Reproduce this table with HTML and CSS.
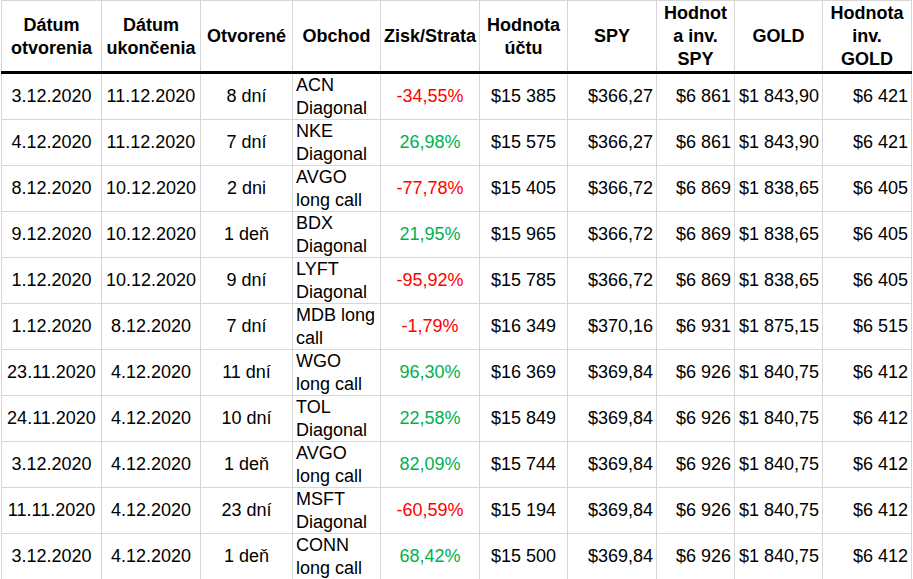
FILE: index.html
```html
<!DOCTYPE html>
<html lang="sk">
<head>
<meta charset="utf-8">
<title>Obchody</title>
<link rel="stylesheet" href="styles.css">
</head>
<body>
<table class="sheet">
  <colgroup>
    <col class="c1"><col class="c2"><col class="c3"><col class="c4"><col class="c5">
    <col class="c6"><col class="c7"><col class="c8"><col class="c9"><col class="c10">
  </colgroup>
  <thead>
    <tr>
      <th>Dátum<br>otvorenia</th>
      <th>Dátum<br>ukončenia</th>
      <th>Otvorené</th>
      <th>Obchod</th>
      <th>Zisk/Strata</th>
      <th>Hodnota<br>účtu</th>
      <th>SPY</th>
      <th>Hodnot<br>a inv.<br>SPY</th>
      <th>GOLD</th>
      <th>Hodnota<br>inv.<br>GOLD</th>
    </tr>
  </thead>
  <tbody>
    <tr><td class="ctr">3.12.2020</td><td class="ctr">11.12.2020</td><td class="ctr">8 dní</td><td class="deal">ACN Diagonal</td><td class="ctr neg">-34,55%</td><td class="ctr">$15 385</td><td class="num">$366,27</td><td class="num">$6 861</td><td class="num">$1 843,90</td><td class="num">$6 421</td></tr>
    <tr><td class="ctr">4.12.2020</td><td class="ctr">11.12.2020</td><td class="ctr">7 dní</td><td class="deal">NKE Diagonal</td><td class="ctr pos">26,98%</td><td class="ctr">$15 575</td><td class="num">$366,27</td><td class="num">$6 861</td><td class="num">$1 843,90</td><td class="num">$6 421</td></tr>
    <tr><td class="ctr">8.12.2020</td><td class="ctr">10.12.2020</td><td class="ctr">2 dni</td><td class="deal">AVGO long call</td><td class="ctr neg">-77,78%</td><td class="ctr">$15 405</td><td class="num">$366,72</td><td class="num">$6 869</td><td class="num">$1 838,65</td><td class="num">$6 405</td></tr>
    <tr><td class="ctr">9.12.2020</td><td class="ctr">10.12.2020</td><td class="ctr">1 deň</td><td class="deal">BDX Diagonal</td><td class="ctr pos">21,95%</td><td class="ctr">$15 965</td><td class="num">$366,72</td><td class="num">$6 869</td><td class="num">$1 838,65</td><td class="num">$6 405</td></tr>
    <tr><td class="ctr">1.12.2020</td><td class="ctr">10.12.2020</td><td class="ctr">9 dní</td><td class="deal">LYFT Diagonal</td><td class="ctr neg">-95,92%</td><td class="ctr">$15 785</td><td class="num">$366,72</td><td class="num">$6 869</td><td class="num">$1 838,65</td><td class="num">$6 405</td></tr>
    <tr><td class="ctr">1.12.2020</td><td class="ctr">8.12.2020</td><td class="ctr">7 dní</td><td class="deal">MDB long call</td><td class="ctr neg">-1,79%</td><td class="ctr">$16 349</td><td class="num">$370,16</td><td class="num">$6 931</td><td class="num">$1 875,15</td><td class="num">$6 515</td></tr>
    <tr><td class="ctr">23.11.2020</td><td class="ctr">4.12.2020</td><td class="ctr">11 dní</td><td class="deal">WGO long call</td><td class="ctr pos">96,30%</td><td class="ctr">$16 369</td><td class="num">$369,84</td><td class="num">$6 926</td><td class="num">$1 840,75</td><td class="num">$6 412</td></tr>
    <tr><td class="ctr">24.11.2020</td><td class="ctr">4.12.2020</td><td class="ctr">10 dní</td><td class="deal">TOL Diagonal</td><td class="ctr pos">22,58%</td><td class="ctr">$15 849</td><td class="num">$369,84</td><td class="num">$6 926</td><td class="num">$1 840,75</td><td class="num">$6 412</td></tr>
    <tr><td class="ctr">3.12.2020</td><td class="ctr">4.12.2020</td><td class="ctr">1 deň</td><td class="deal">AVGO long call</td><td class="ctr pos">82,09%</td><td class="ctr">$15 744</td><td class="num">$369,84</td><td class="num">$6 926</td><td class="num">$1 840,75</td><td class="num">$6 412</td></tr>
    <tr><td class="ctr">11.11.2020</td><td class="ctr">4.12.2020</td><td class="ctr">23 dní</td><td class="deal">MSFT Diagonal</td><td class="ctr neg">-60,59%</td><td class="ctr">$15 194</td><td class="num">$369,84</td><td class="num">$6 926</td><td class="num">$1 840,75</td><td class="num">$6 412</td></tr>
    <tr><td class="ctr">3.12.2020</td><td class="ctr">4.12.2020</td><td class="ctr">1 deň</td><td class="deal">CONN long call</td><td class="ctr pos">68,42%</td><td class="ctr">$15 500</td><td class="num">$369,84</td><td class="num">$6 926</td><td class="num">$1 840,75</td><td class="num">$6 412</td></tr>
  </tbody>
</table>
</body>
</html>
```

FILE: styles.css
```css
html, body {
  margin: 0;
  padding: 0;
  background: #ffffff;
}

body {
  font-family: "Liberation Sans", Arial, sans-serif;
  font-size: 18px;
  color: #000000;
}

.sheet {
  border-collapse: collapse;
  table-layout: fixed;
  width: 910px;
  margin-left: 1px;
  border-left: 1px solid #9e9e9e;
  border-right: 1px solid #c8c8c8;
  border-bottom: 1px solid #c8c8c8;
}

.c1 { width: 100px; }
.c2 { width: 99px; }
.c3 { width: 92px; }
.c4 { width: 88px; }
.c5 { width: 99px; }
.c6 { width: 88px; }
.c7 { width: 89px; }
.c8 { width: 78px; }
.c9 { width: 88px; }
.c10 { width: 89px; }

.sheet th,
.sheet td {
  border: 1px solid #d6d6d6;
  padding: 0 3px;
  overflow: hidden;
  white-space: normal;
  vertical-align: middle;
}

.sheet th {
  height: 68px;
  line-height: 23px;
  padding-top: 1px;
  padding-bottom: 0;
  font-weight: bold;
  text-align: center;
  border-bottom: 3px solid #000000;
}

.sheet td {
  height: 45px;
  line-height: 22.5px;
  padding-top: 0;
  padding-bottom: 0;
}

.ctr { text-align: center; }

.num {
  text-align: right;
  padding-right: 4px;
}

.deal {
  text-align: left;
  padding-left: 3px;
}

.neg { color: #ff0000; }
.pos { color: #00b050; }
```
